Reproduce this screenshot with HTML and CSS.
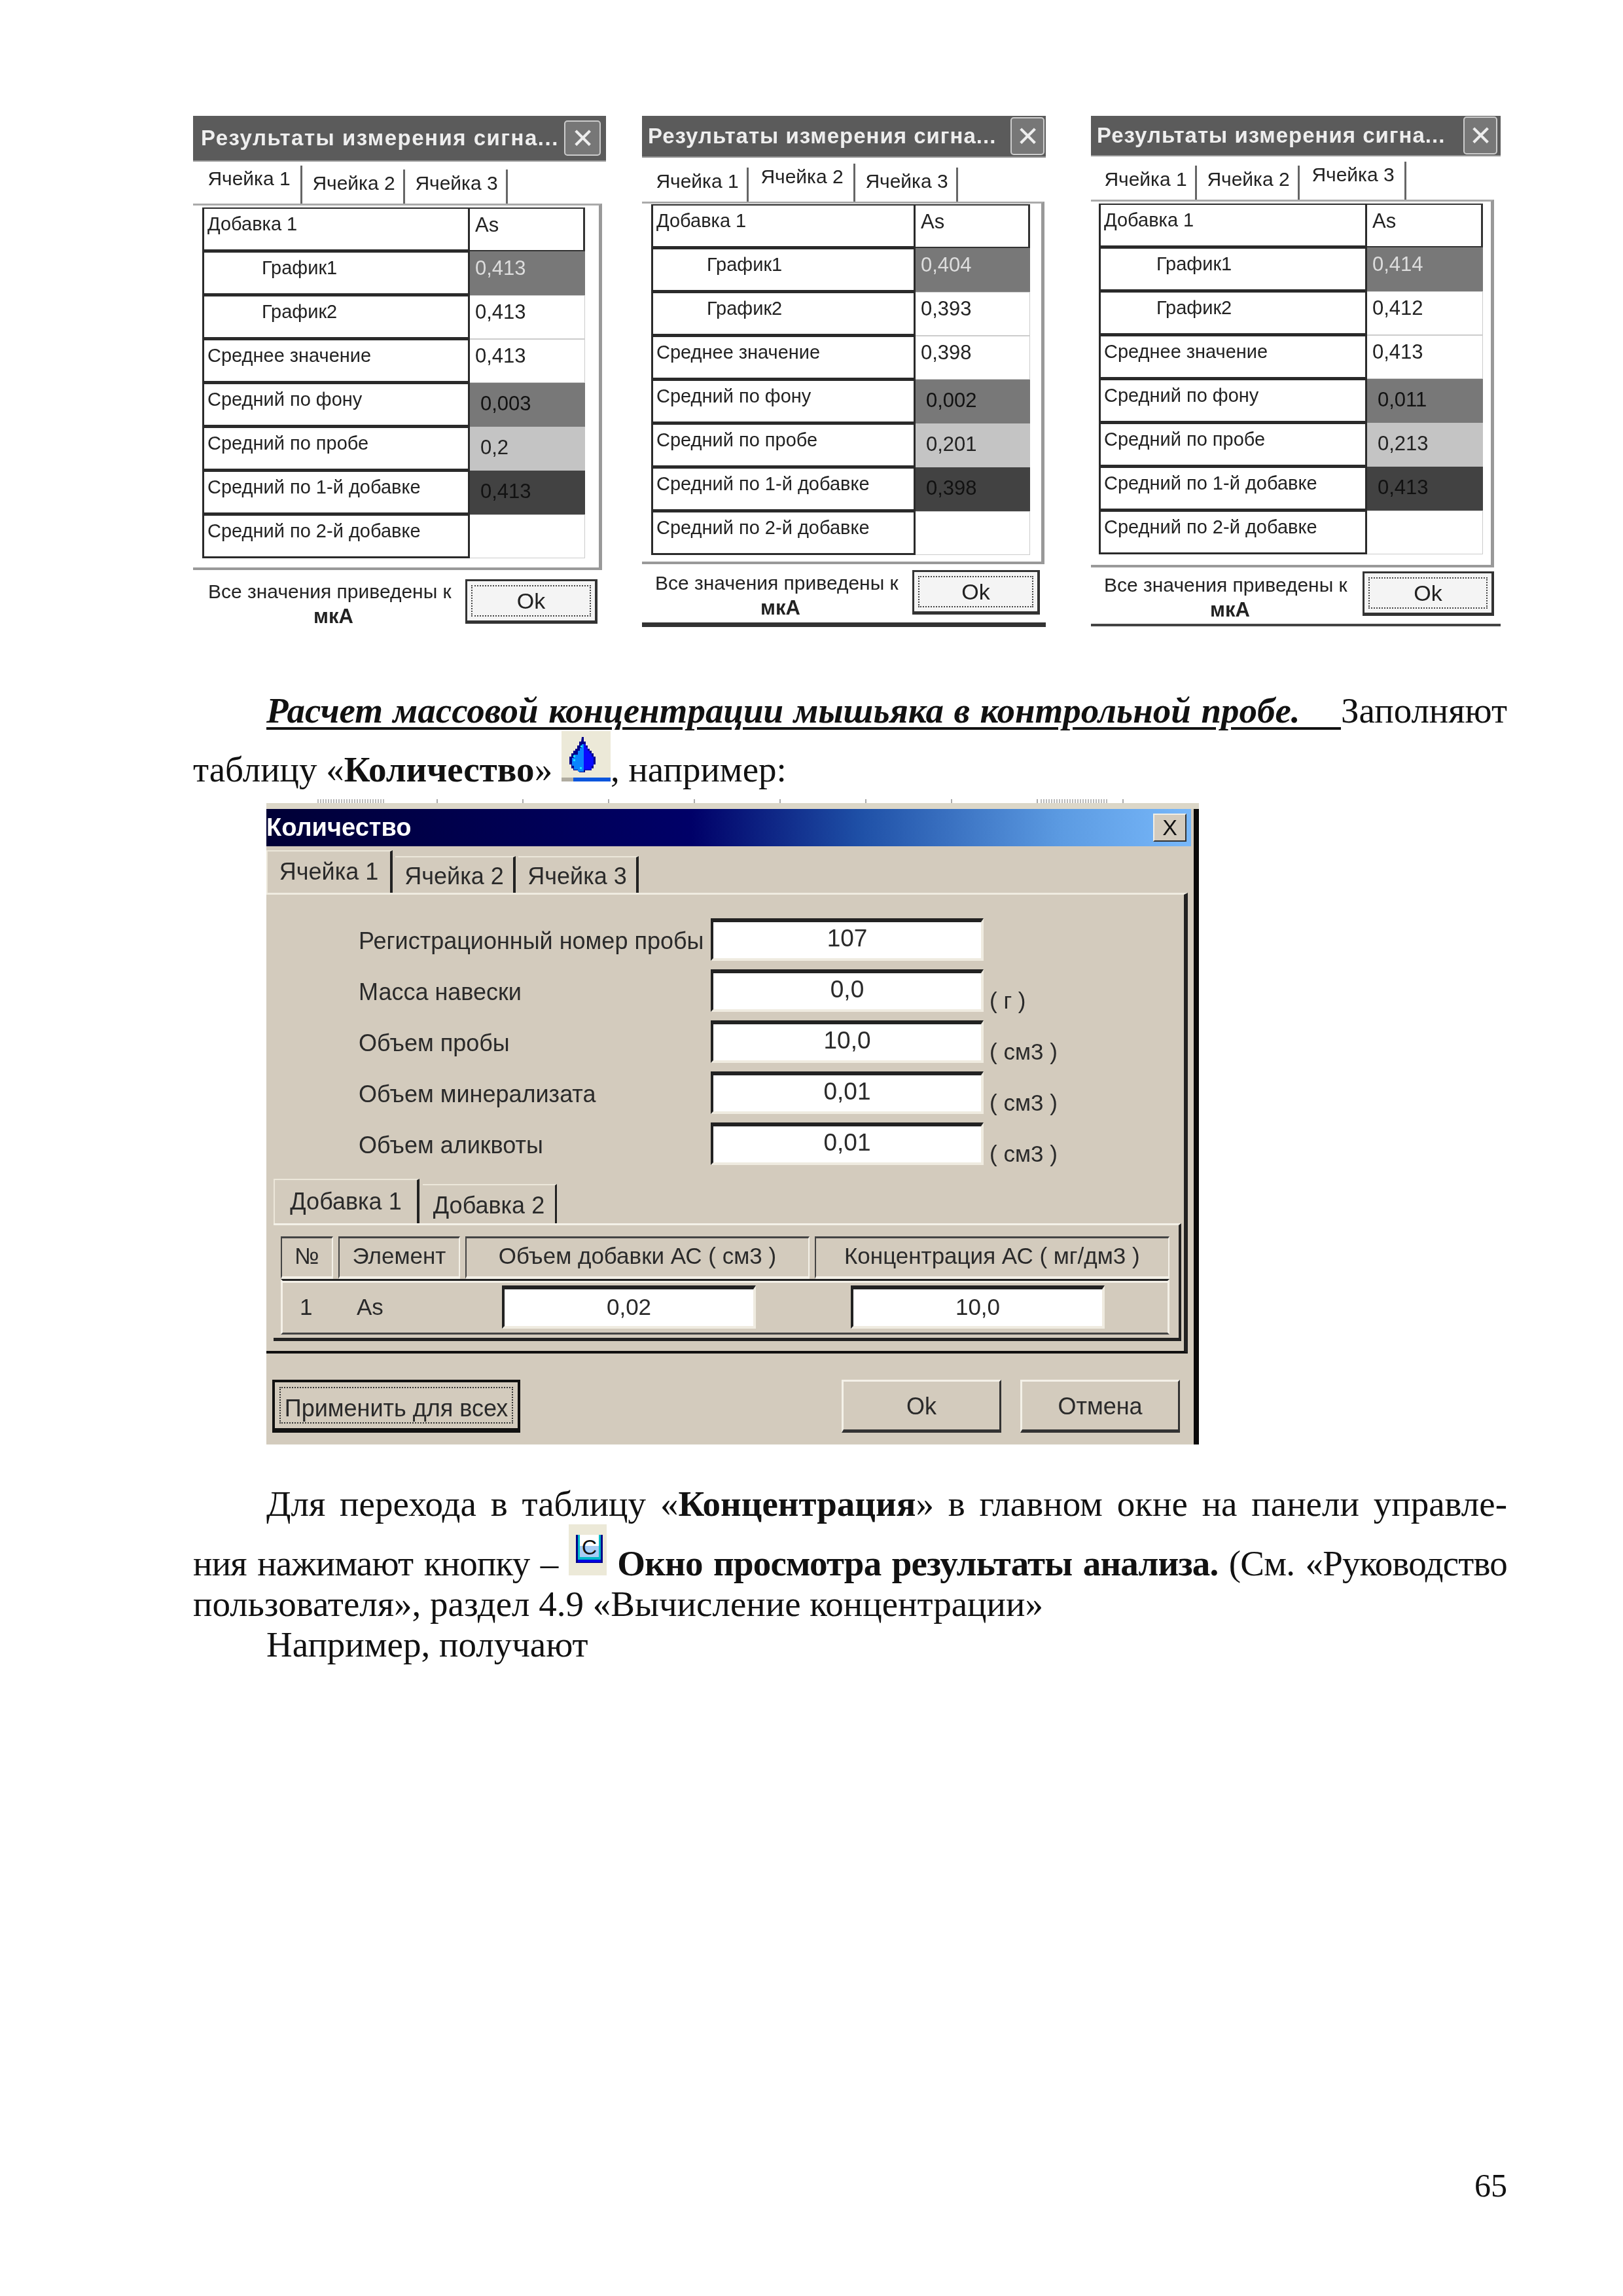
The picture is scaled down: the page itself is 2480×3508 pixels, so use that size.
FILE: index.html
```html
<!DOCTYPE html>
<html lang="ru">
<head>
    <meta charset="UTF-8">
    <title>Страница 65</title>
    <link rel="stylesheet" href="styles.css">
</head>
<body>
    <div class="shots">
        <!-- Three result windows, one per cell -->
        <div class="panel panel-a">
            <div class="panel-title"><span>Результаты измерения сигна...</span><b class="panel-close">✕</b></div>
            <div class="tabs">
                <div class="tab tab-on">Ячейка 1</div>
                <div class="tab">Ячейка 2</div>
                <div class="tab">Ячейка 3</div>
            </div>
            <div class="frame">
                <div class="cells">
                    <div class="lbl">Добавка 1</div><div class="val val-head">As</div>
                    <div class="lbl lbl-in">График1</div><div class="val c-mid t-light">0,413</div>
                    <div class="lbl lbl-in">График2</div><div class="val">0,413</div>
                    <div class="lbl">Среднее значение</div><div class="val">0,413</div>
                    <div class="lbl">Средний по фону</div><div class="val c-mid low">0,003</div>
                    <div class="lbl">Средний по пробе</div><div class="val c-light low">0,2</div>
                    <div class="lbl">Средний по 1-й добавке</div><div class="val c-dark low">0,413</div>
                    <div class="lbl">Средний по 2-й добавке</div><div class="val"></div>
                </div>
            </div>
            <div class="panel-foot">
                <div class="note">Все значения приведены к<b>мкА</b></div>
                <div class="ok"><span>Ok</span></div>
            </div>
        </div>

        <div class="panel panel-b">
            <div class="panel-title"><span>Результаты измерения сигна...</span><b class="panel-close">✕</b></div>
            <div class="tabs">
                <div class="tab">Ячейка 1</div>
                <div class="tab tab-on">Ячейка 2</div>
                <div class="tab">Ячейка 3</div>
            </div>
            <div class="frame">
                <div class="cells">
                    <div class="lbl">Добавка 1</div><div class="val val-head">As</div>
                    <div class="lbl lbl-in">График1</div><div class="val c-mid t-light">0,404</div>
                    <div class="lbl lbl-in">График2</div><div class="val">0,393</div>
                    <div class="lbl">Среднее значение</div><div class="val">0,398</div>
                    <div class="lbl">Средний по фону</div><div class="val c-mid low">0,002</div>
                    <div class="lbl">Средний по пробе</div><div class="val c-light low">0,201</div>
                    <div class="lbl">Средний по 1-й добавке</div><div class="val c-dark low">0,398</div>
                    <div class="lbl">Средний по 2-й добавке</div><div class="val"></div>
                </div>
            </div>
            <div class="panel-foot">
                <div class="note">Все значения приведены к<b>мкА</b></div>
                <div class="ok"><span>Ok</span></div>
            </div>
        </div>

        <div class="panel panel-c">
            <div class="panel-title"><span>Результаты измерения сигна...</span><b class="panel-close">✕</b></div>
            <div class="tabs">
                <div class="tab">Ячейка 1</div>
                <div class="tab">Ячейка 2</div>
                <div class="tab tab-on">Ячейка 3</div>
            </div>
            <div class="frame">
                <div class="cells">
                    <div class="lbl">Добавка 1</div><div class="val val-head">As</div>
                    <div class="lbl lbl-in">График1</div><div class="val c-mid t-light">0,414</div>
                    <div class="lbl lbl-in">График2</div><div class="val">0,412</div>
                    <div class="lbl">Среднее значение</div><div class="val">0,413</div>
                    <div class="lbl">Средний по фону</div><div class="val c-mid low">0,011</div>
                    <div class="lbl">Средний по пробе</div><div class="val c-light low">0,213</div>
                    <div class="lbl">Средний по 1-й добавке</div><div class="val c-dark low">0,413</div>
                    <div class="lbl">Средний по 2-й добавке</div><div class="val"></div>
                </div>
            </div>
            <div class="panel-foot">
                <div class="note">Все значения приведены к<b>мкА</b></div>
                <div class="ok"><span>Ok</span></div>
            </div>
        </div>
    </div>

    <div class="text text-first">
        <div class="line just indent"><span class="head">Расчет массовой концентрации мышьяка в контрольной пробе.&nbsp;&nbsp;&nbsp;&nbsp;</span>Заполняют</div>
        <div class="line">таблицу «<b>Количество</b>»
            <svg class="icon" viewBox="0 0 75 77" width="75" height="77">
                <rect width="75" height="77" fill="#ece9d8"/>
                <rect y="71" width="18" height="6" fill="#b0aca0"/>
                <rect x="18" y="71" width="57" height="6" fill="#0a55dd"/>
                <path d="M31 9h3v7h3v6h3v5h3v3h3v4h3v5h3v12h-3v6h-3v3h-10v3h-9v-3h-9v-3h-3v-6h-3v-12h3v-5h3v-4h3v-3h3v-5h3v-6h3z" fill="#00008a"/>
                <path d="M31 20h3v42h-9v-3h-6v-6h-3v-12h3v-5h6v-6h3v-4h3z" fill="#0a84ff"/>
                <path d="M34 20h3v5h3v5h3v4h3v5h3v14h-3v6h-12z" fill="#0a0aff"/>
                <path d="M29 22h3v3h-3zM18 37h3v3h-3zM18 43h3v3h-3zM28 55h3v3h-3z" fill="#18e6ff"/>
            </svg>, например:</div>
    </div>

    <!-- Quantity dialog -->
    <div class="dialog">
        <div class="ruler"><i></i><i></i></div>
        <div class="dlg-body">
            <div class="dlg-title"><span>Количество</span><b class="dlg-close">X</b></div>
            <div class="dtabs">
                <div class="dtab dtab-on">Ячейка 1</div>
                <div class="dtab">Ячейка 2</div>
                <div class="dtab">Ячейка 3</div>
            </div>
            <div class="page-box">
                <div class="form-rows">
                    <div class="form-lbl">Регистрационный номер пробы</div><div class="field">107</div><div class="unit"></div>
                    <div class="form-lbl">Масса навески</div><div class="field">0,0</div><div class="unit">( г )</div>
                    <div class="form-lbl">Объем пробы</div><div class="field">10,0</div><div class="unit">( см3 )</div>
                    <div class="form-lbl">Объем минерализата</div><div class="field">0,01</div><div class="unit">( см3 )</div>
                    <div class="form-lbl">Объем аликвоты</div><div class="field">0,01</div><div class="unit">( см3 )</div>
                </div>
                <div class="atabs">
                    <div class="atab atab-on">Добавка 1</div>
                    <div class="atab">Добавка 2</div>
                </div>
                <div class="add-box">
                    <div class="add-head">
                        <div class="hcell h-no">№</div>
                        <div class="hcell h-el">Элемент</div>
                        <div class="hcell h-vol">Объем добавки АС ( см3 )</div>
                        <div class="hcell h-con">Концентрация АС ( мг/дм3 )</div>
                    </div>
                    <div class="add-row">
                        <div class="r-no">1</div>
                        <div class="r-el">As</div>
                        <div class="field field-sm">0,02</div>
                        <div class="field field-sm field-two">10,0</div>
                    </div>
                </div>
            </div>
            <div class="dlg-btns">
                <div class="btn btn-main"><span>Применить для всех</span></div>
                <div class="btn btn-ok">Ok</div>
                <div class="btn">Отмена</div>
            </div>
        </div>
    </div>

    <div class="text text-second">
        <div class="line just indent">Для перехода в таблицу «<b>Концентрация</b>» в главном окне на панели управле-</div>
        <div class="line just tight">ния нажимают кнопку –
            <svg class="icon" viewBox="0 0 58 78" width="58" height="78">
                <rect width="58" height="78" fill="#ece9d8"/>
                <rect x="11" y="16" width="41" height="43" fill="#00008a"/>
                <rect x="14" y="16" width="35" height="38" fill="#00b8c8"/>
                <rect x="14" y="54" width="35" height="4" fill="#0000e0"/>
                <rect x="17" y="16" width="29" height="34" fill="#fff"/>
                <rect x="17" y="33" width="29" height="17" fill="#a8ccf4"/>
                <text x="20" y="46" class="icon-c">C</text>
            </svg> <b>Окно просмотра результаты анализа.</b> (См. «Руководство</div>
        <div class="line">пользователя», раздел 4.9 «Вычисление концентрации»</div>
        <div class="line indent">Например, получают</div>
    </div>

    <div class="page-num">65</div>
</body>
</html>
```

FILE: styles.css
```css
* {
    box-sizing: border-box;
}
body {
    margin: 0;
    height: 3508px;
    padding: 177px 177px 140px 295px;
    display: flex;
    flex-direction: column;
    background: white;
    color: #111;
    font-family: "Liberation Serif", serif;
    font-size: 55px;
}

/* result windows */
.shots {
    display: flex;
    align-items: flex-start;
    font-family: "Liberation Sans", sans-serif;
    filter: blur(0.7px);
}
.panel {
    flex: none;
    color: #222;
}
.panel-a {
    width: 631px;
}
.panel-b {
    width: 617px;
    margin-left: 55px;
}
.panel-c {
    width: 626px;
    margin-left: 69px;
}
.panel-title {
    height: 70px;
    padding: 0 8px 0 12px;
    display: flex;
    align-items: center;
    justify-content: space-between;
    background: #5b5b5b;
    border-bottom: 2px solid #999;
    color: #eee;
    font-size: 33px;
    font-weight: bold;
    letter-spacing: 1.5px;
    white-space: nowrap;
}
.panel-b .panel-title {
    height: 64px;
    padding: 0 2px 0 9px;
    letter-spacing: 1px;
}
.panel-c .panel-title {
    height: 62px;
    padding: 0 5px 0 9px;
    letter-spacing: 1px;
}
.panel-close {
    flex: none;
    width: 56px;
    height: 54px;
    display: flex;
    align-items: center;
    justify-content: center;
    background: #777;
    border: 2px solid #ccc;
    border-radius: 5px;
    font-size: 42px;
    font-weight: normal;
    letter-spacing: 0;
}
.panel-b .panel-close, .panel-c .panel-close {
    width: 52px;
    height: 58px;
}
.tabs {
    height: 64px;
    padding: 3px 0 0 7px;
    display: flex;
    align-items: flex-end;
    font-size: 30px;
}
.panel-b .tabs {
    height: 67px;
    padding-left: 9px;
}
.panel-c .tabs {
    height: 66px;
    padding-left: 8px;
}
.tab {
    width: 154px;
    height: 52px;
    margin-right: 3px;
    padding-top: 4px;
    text-align: center;
    border-right: 3px solid #666;
}
.tab-on {
    width: 160px;
    height: 58px;
    padding-top: 3px;
}
.frame {
    width: 625px;
    height: 560px;
    padding: 3px 0 0 14px;
    border-top: 3px solid #aaa;
    border-right: 5px solid #999;
    border-bottom: 4px solid #999;
}
.panel-b .frame {
    width: 615px;
    height: 554px;
    padding: 1px 0 0 14px;
}
.panel-c .frame {
    width: 616px;
    height: 562px;
    padding-left: 12px;
}
.cells {
    display: grid;
    grid-auto-rows: 67px;
    font-size: 29px;
}
.panel-a .cells {
    grid-template-columns: 409px 176px;
}
.panel-b .cells {
    grid-template-columns: 404px 175px;
}
.panel-c .cells {
    grid-template-columns: 410px 177px;
}
.lbl {
    padding: 7px 0 0 5px;
    border: 3px solid #2a2a2a;
    border-top-width: 2px;
    border-right-width: 3px;
    white-space: nowrap;
}
.lbl-in {
    padding-left: 88px;
}
.panel-b .lbl-in {
    padding-left: 82px;
}
.panel-c .lbl-in {
    padding-left: 85px;
}
.val {
    padding: 7px 0 0 8px;
    border: 1px solid #ccc;
    border-left: 0;
    font-size: 31px;
}
.val-head {
    border: 2px solid #333;
    border-left: 0;
    border-right-width: 3px;
}
.c-mid {
    background: #787878;
    border-color: #787878;
}
.c-light {
    background: #c4c4c4;
    border-color: #c4c4c4;
}
.c-dark {
    background: #424242;
    border-color: #424242;
}
.t-light {
    color: #ddd;
}
.low {
    padding: 13px 0 0 16px;
}
.c-mid.low, .c-dark.low {
    color: #111;
}
.panel-foot {
    height: 84px;
    display: flex;
    padding-top: 14px;
}
.note {
    width: 416px;
    padding-left: 23px;
    font-size: 30px;
    line-height: 38px;
    white-space: nowrap;
}
.note b {
    display: block;
    padding-right: 10px;
    text-align: center;
    font-size: 31px;
}
.ok {
    width: 202px;
    height: 68px;
    padding: 6px;
    background: #f4f4f4;
    border: 3px solid #333;
    border-right-width: 4px;
    border-bottom-width: 5px;
    font-size: 34px;
    text-align: center;
}
.ok span {
    display: block;
    height: 100%;
    border: 2px dotted #444;
    line-height: 44px;
}
.panel-b .panel-foot {
    height: 96px;
    padding-top: 10px;
    border-bottom: 7px solid #333;
}
.panel-b .note {
    width: 413px;
    padding-left: 20px;
}
.panel-b .ok {
    width: 195px;
    margin-top: -1px;
}
.panel-c .panel-foot {
    height: 90px;
    padding-top: 8px;
    border-bottom: 4px solid #444;
}
.panel-c .note {
    width: 415px;
    padding-left: 20px;
}
.panel-c .ok {
    width: 201px;
    margin-top: -2px;
}

/* document text */
.text {
    flex: none;
}
.text-first {
    margin-top: 97px;
}
.text-second {
    margin-top: 60px;
}
.line {
    line-height: 62px;
    white-space: nowrap;
}
.indent {
    padding-left: 112px;
}
.just {
    white-space: normal;
    text-align: justify;
    text-align-last: justify;
}
.tight {
    letter-spacing: -0.8px;
    word-spacing: -5px;
}
.head {
    font-weight: bold;
    font-style: italic;
    text-decoration: underline;
    text-decoration-thickness: 4px;
    text-underline-offset: 7px;
}
.icon {
    vertical-align: baseline;
}
.icon-c {
    font-family: "Liberation Sans", sans-serif;
    font-size: 32px;
    fill: #111;
}

/* quantity dialog */
.dialog {
    flex: none;
    width: 1425px;
    margin: 14px 0 0 112px;
    font-family: "Liberation Sans", sans-serif;
    color: #2a2a2a;
    filter: blur(0.6px);
}
.ruler {
    height: 15px;
    display: flex;
    background:
        linear-gradient(#dcd7c8, #dcd7c8) 0 100% / 100% 9px no-repeat,
        repeating-linear-gradient(90deg, white 0 129px, #aaa 129px 131px);
}
.ruler i {
    width: 104px;
    height: 6px;
    margin-left: 78px;
    background: repeating-linear-gradient(90deg, #bbb 0 2px, white 2px 4px);
}
.ruler i + i {
    margin-left: 1001px;
}
.dlg-body {
    height: 971px;
    background: #d3cbbd;
    border-right: 8px solid #0a0a0a;
}
.dlg-title {
    height: 57px;
    margin-right: 4px;
    padding: 0 7px 0 0;
    display: flex;
    align-items: center;
    justify-content: space-between;
    background: linear-gradient(90deg, #000036 0, #000068 46%, #1e4fa6 64%, #5c9be2 86%, #78b8fa 100%);
    color: white;
    font-size: 38px;
    font-weight: bold;
}
.dlg-close {
    width: 51px;
    height: 43px;
    display: flex;
    align-items: center;
    justify-content: center;
    background: #d3cbbd;
    border: 2px solid;
    border-color: #f2eee4 #333 #333 #f2eee4;
    color: #111;
    font-size: 34px;
    font-weight: normal;
}
.dtabs {
    height: 71px;
    padding-top: 6px;
    display: flex;
    align-items: flex-end;
    font-size: 36px;
}
.dtab {
    width: 184px;
    height: 56px;
    margin-right: 4px;
    padding-top: 8px;
    text-align: center;
    border-top: 2px solid #ece7da;
    border-right: 4px solid #222;
}
.dtab-on {
    width: 193px;
    height: 65px;
    border-left: 2px solid #ece7da;
    padding-top: 10px;
}
.page-box {
    height: 704px;
    margin-right: 9px;
    padding: 36px 0 0 11px;
    border-top: 3px solid #efebe0;
    border-right: 6px solid #222;
    border-bottom: 4px solid #111;
}
.form-rows {
    display: grid;
    grid-template-columns: 538px 417px auto;
    grid-auto-rows: 65px;
    row-gap: 13px;
    padding-left: 130px;
    font-size: 36px;
}
.form-lbl {
    padding-top: 14px;
    white-space: nowrap;
}
.field {
    background: white;
    border: 4px solid #efebe0;
    border-top: 6px solid #222;
    border-left: 4px solid #222;
    font-size: 37px;
    line-height: 50px;
    text-align: center;
}
.unit {
    padding: 28px 0 0 9px;
    font-size: 35px;
    white-space: nowrap;
}
.atabs {
    height: 68px;
    margin-top: 21px;
    display: flex;
    align-items: flex-end;
    font-size: 36px;
}
.atab {
    width: 205px;
    height: 60px;
    padding-top: 10px;
    text-align: center;
    border-top: 2px solid #ece7da;
    border-right: 3px solid #222;
}
.atab-on {
    width: 223px;
    height: 68px;
    margin-right: 5px;
    padding-top: 12px;
    border-left: 2px solid #ece7da;
    border-right-width: 4px;
}
.add-box {
    width: 1387px;
    height: 180px;
    padding: 17px 14px 0 11px;
    border-top: 3px solid #f4f1e8;
    border-right: 4px solid #222;
    border-bottom: 5px solid #222;
}
.add-head {
    height: 65px;
    display: flex;
    gap: 8px;
    font-size: 35px;
}
.hcell {
    text-align: center;
    line-height: 54px;
    white-space: nowrap;
    border-top: 3px solid #444;
    border-left: 2px solid #444;
    border-bottom: 4px solid #f4f1e8;
    border-right: 2px solid #f4f1e8;
}
.h-no {
    width: 80px;
}
.h-el {
    width: 187px;
}
.h-vol {
    width: 527px;
}
.h-con {
    width: 544px;
}
.add-row {
    height: 85px;
    display: flex;
    align-items: center;
    font-size: 35px;
    border: 3px solid;
    border-color: #222 #f4f1e8 #444 #f4f1e8;
    box-shadow: inset 0 3px 0 #f4f1e8;
}
.r-no {
    width: 70px;
    padding-left: 26px;
}
.r-el {
    width: 265px;
    padding-left: 43px;
}
.field-sm {
    width: 388px;
    height: 66px;
    line-height: 54px;
    font-size: 35px;
}
.field-two {
    margin-left: 145px;
}
.dlg-btns {
    display: flex;
    margin-top: 40px;
    padding: 0 21px 0 9px;
    font-size: 36px;
}
.btn {
    width: 244px;
    height: 81px;
    margin-left: 29px;
    line-height: 76px;
    text-align: center;
    border: 3px solid;
    border-color: #f4f1e8 #333 #333 #f4f1e8;
    border-bottom-width: 5px;
}
.btn-ok {
    margin-left: auto;
}
.btn-main {
    width: 379px;
    margin-left: 0;
    padding: 7px;
    line-height: 1;
    white-space: nowrap;
    border: 4px solid #111;
    border-bottom-width: 7px;
    font-size: 36px;
}
.btn-main span {
    display: block;
    height: 100%;
    padding-top: 13px;
    border: 2px dotted #333;
}

.page-num {
    margin-top: auto;
    text-align: right;
    font-size: 50px;
    line-height: 58px;
}
```
